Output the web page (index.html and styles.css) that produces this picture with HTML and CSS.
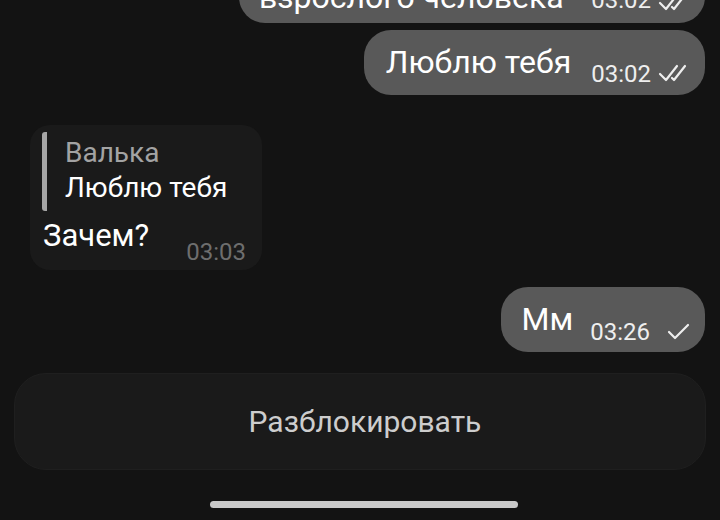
FILE: index.html
```html
<!DOCTYPE html>
<html lang="ru">
<head>
    <meta charset="UTF-8">
    <meta name="viewport" content="width=device-width, initial-scale=1.0">
    <title>Чат</title>
    <link rel="stylesheet" href="styles.css">
</head>
<body>
    <div class="screen">
        <div class="chat">
            <div class="msg out cut">
                <span class="text">взрослого человека</span>
                <span class="time">03:02</span>
                <svg class="ticks" viewBox="0 0 35 19"><path d="M2 11 l6 6 l11 -14 M14 15 l2 2 l11 -14"/></svg>
            </div>

            <div class="msg out first">
                <span class="text">Люблю тебя</span>
                <span class="time">03:02</span>
                <svg class="ticks" viewBox="0 0 35 19"><path d="M2 11 l6 6 l11 -14 M14 15 l2 2 l11 -14"/></svg>
            </div>

            <div class="msg in">
                <div class="reply">
                    <div class="reply-name">Валька</div>
                    <div class="reply-text">Люблю тебя</div>
                </div>
                <div class="in-body">
                    <span class="text">Зачем?</span>
                    <span class="time">03:03</span>
                </div>
            </div>

            <div class="msg out last">
                <span class="text">Мм</span>
                <span class="time">03:26</span>
                <svg class="tick" viewBox="0 0 23 17"><path d="M2 9 l6 6 l13 -13"/></svg>
            </div>
        </div>

        <div class="unblock">Разблокировать</div>

        <div class="home-bar"></div>
    </div>
</body>
</html>
```

FILE: styles.css
```css
body {
    margin: 0;
    padding: 0;
    background: #131313;
    font-family: Roboto, "Noto Sans", sans-serif;
    color: #ffffff;
    overflow: hidden;
}

.screen {
    width: 720px;
    height: 520px;
    display: flex;
    flex-direction: column;
    overflow: hidden;
}

.chat {
    display: flex;
    flex-direction: column;
    padding: 0 15px 0 30px;
}

/* outgoing bubbles */
.msg.out {
    align-self: flex-end;
    display: flex;
    align-items: flex-start;
    background: #595959;
    border-radius: 27px;
    box-sizing: border-box;
    height: 65px;
    padding: 13px 12px 0 22px;
}

.msg .text {
    font-size: 32px;
    line-height: 38px;
    white-space: nowrap;
}

.msg .time {
    font-size: 24px;
    line-height: 24px;
    margin: 19px 0 0 20px;
    color: #eeeeee;
}

.ticks {
    width: 35px;
    height: 19px;
    margin: 20px 0 0 7px;
    flex-shrink: 0;
}

.tick {
    width: 23px;
    height: 17px;
    margin: 23px 0 0 17px;
}

.ticks path, .tick path {
    fill: none;
    stroke: #eeeeee;
    stroke-width: 2.2;
    stroke-linecap: round;
    stroke-linejoin: round;
}

.msg.cut {
    margin-top: -42px;
    width: 466px;
    align-items: flex-end;
    border-radius: 0 0 26px 26px;
    padding: 0 12px 7px 20px;
}

.msg.cut .text {
    flex: 1;
}

.msg.cut .time {
    margin: 0 0 4px 20px;
}

.msg.cut .ticks {
    margin: 0 0 5px 7px;
}

.msg.first {
    margin-top: 7px;
}

.msg.last {
    margin-top: 17px;
    padding-left: 21px;
    padding-right: 15px;
}

.msg.last .time {
    margin-left: 17px;
    margin-top: 20px;
}

/* incoming bubble with reply */
.msg.in {
    align-self: flex-start;
    margin-top: 30px;
    width: 232px;
    height: 145px;
    box-sizing: border-box;
    background: #1a1a1a;
    border-radius: 20px;
    padding: 7px 12px 0 12px;
}

.reply {
    border-left: 5px solid #a6a6a6;
    border-radius: 3px;
    padding: 3px 0 6px 18px;
}

.reply-name, .reply-text {
    font-size: 28px;
    line-height: 35px;
}

.reply-name {
    color: #a3a3a3;
}

.in-body {
    display: flex;
    align-items: flex-start;
    margin-top: 7px;
    padding-left: 1px;
}

.in-body .text {
    font-size: 31px;
    line-height: 36px;
}

.in-body .time {
    margin: 22px 0 0 37px;
    color: #6e6e6e;
}

/* bottom */
.unblock {
    margin: 21px 14px 0 14px;
    height: 97px;
    background: #1a1a1a;
    border: 1px solid #1f1f1f;
    box-sizing: border-box;
    border-radius: 32px;
    display: flex;
    align-items: center;
    justify-content: center;
    font-size: 30px;
    color: #cdcdcd;
    padding-left: 10px;
}

.home-bar {
    align-self: center;
    margin-top: 31px;
    margin-left: 8px;
    width: 308px;
    height: 7px;
    border-radius: 4px;
    background: #c9c9c9;
}
```
